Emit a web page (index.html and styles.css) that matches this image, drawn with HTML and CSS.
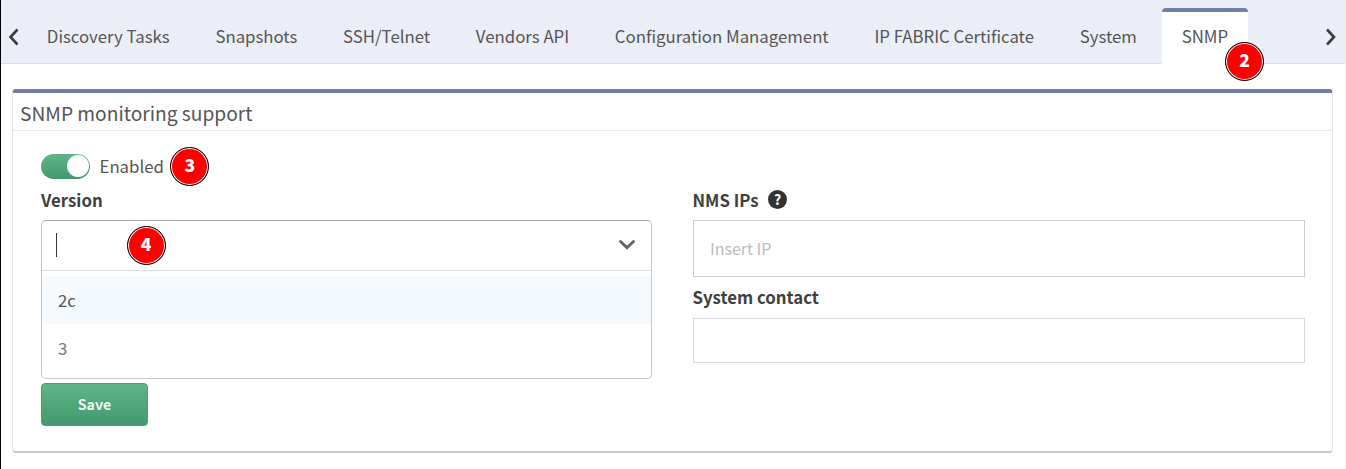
FILE: index.html
```html
<!DOCTYPE html>
<html lang="en">
<head>
<meta charset="utf-8">
<title>SNMP</title>
<link rel="stylesheet" href="styles.css">
</head>
<body>
<div class="page">
  <nav class="tabs">
    <svg class="scroll" width="12" height="18" viewBox="0 0 12 18"><path d="M10.500 1.500 3.500 9l7 7.500"/></svg>
    <div class="tab-list">
      <a class="tab">Discovery Tasks</a>
      <a class="tab">Snapshots</a>
      <a class="tab">SSH/Telnet</a>
      <a class="tab">Vendors API</a>
      <a class="tab">Configuration Management</a>
      <a class="tab">IP FABRIC Certificate</a>
      <a class="tab">System</a>
      <a class="tab active">SNMP<span class="marker marker-tab">2</span></a>
    </div>
    <svg class="scroll" width="12" height="18" viewBox="0 0 12 18"><path d="M2 1.500 9 9l-7 7.500"/></svg>
  </nav>
  <section class="panel">
    <h1 class="panel-title">SNMP monitoring support</h1>
    <div class="columns">
      <div class="column">
        <div class="toggle-row">
          <span class="toggle"><span class="knob"></span></span>
          <span class="toggle-label">Enabled</span>
          <span class="marker">3</span>
        </div>
        <div class="label">Version</div>
        <div class="select">
          <div class="select-head">
            <span class="caret"></span>
            <span class="marker marker-select">4</span>
            <svg class="chevron" width="18" height="12" viewBox="0 0 18 12"><path d="M2.500 2.500 9 8.700l6.500-6.200"/></svg>
          </div>
          <div class="options">
            <div class="option highlighted">2c</div>
            <div class="option">3</div>
          </div>
        </div>
        <button class="save">Save</button>
      </div>
      <div class="column column-right">
        <div class="label">NMS IPs <span class="help">?</span></div>
        <div class="input input-tall">Insert IP</div>
        <div class="label label-contact">System contact</div>
        <div class="input"></div>
      </div>
    </div>
  </section>
</div>
</body>
</html>
```
FILE: styles.css
```css
* { box-sizing: border-box; }
body {
  margin: 0;
  background: #fff;
  color: #555;
  font: 16.8px/24px "Noto Sans CJK SC", "Noto Sans", sans-serif;
}
.page {
  height: 469px;
  border-left: 1px solid #000;
  border-right: 1px solid #ececec;
  overflow: hidden;
}
.tabs {
  display: flex;
  height: 64px;
  padding: 8px 8px 0 6px;
  background: #ebeef6;
  border-bottom: 1px solid #d9dcdf;
}
.scroll {
  flex: none;
  margin-top: 20px;
  fill: none;
  stroke: #3c3c3c;
  stroke-width: 2.6;
}
.tab-list { display: flex; flex: 1; padding-left: 5px; }
.tab {
  position: relative;
  height: 56px;
  padding: 16px 22.85px 0;
  white-space: nowrap;
}
.tab.active {
  margin-left: 2px;
  padding: 12px 20px 0;
  background: #fff;
  border-top: 4px solid #7080a3;
  border-radius: 4px 4px 0 0;
}
.marker {
  display: flex;
  align-items: center;
  justify-content: center;
  width: 39px;
  height: 39px;
  padding-bottom: 2px;
  border: 1px solid #000;
  border-radius: 50%;
  background: #f00;
  box-shadow: inset 0 0 0 1px #fff;
  color: #fff;
  font-size: 17.5px;
  font-weight: 900;
}
.marker-tab { position: absolute; left: 63.500px; top: 29.500px; z-index: 1; }
.marker-select { position: absolute; left: 84.500px; top: 4.500px; }
.panel {
  height: 364px;
  margin: 24.500px 12px 0 11px;
  border: 1px solid #e6e6e6;
  border-top: 4px solid #7080a3;
  border-bottom: 2px solid #cacaca;
  border-radius: 4px;
}
.panel-title {
  height: 38px;
  margin: 0;
  padding: 8px 7px 0;
  border-bottom: 1px solid #e8e8e8;
  font-size: 19.2px;
  font-weight: 400;
}
.columns {
  display: grid;
  grid-template-columns: 611px 612px;
  column-gap: 40.500px;
  padding: 15.500px 0 0 28px;
}
.toggle-row { display: flex; align-items: center; height: 40px; }
.toggle {
  display: flex;
  justify-content: flex-end;
  width: 49px;
  height: 25px;
  padding: 1.500px;
  border-radius: 13px;
  background: linear-gradient(#5eb587, #41996d);
}
.knob { width: 22px; height: 22px; border-radius: 50%; background: #fff; }
.toggle-label { margin: 0 6.500px 0 9.500px; }
.label {
  display: flex;
  align-items: center;
  height: 34px;
  padding-bottom: 7px;
  color: #3f3f3f;
  font-weight: 700;
}
.select {
  height: 159px;
  border: 1px solid #c6c6c6;
  border-top-color: #aaa;
  border-radius: 5px;
}
.select-head {
  position: relative;
  display: flex;
  align-items: center;
  justify-content: space-between;
  height: 49.500px;
  padding: 0 15px 0 14px;
  border-bottom: 1px solid #dedede;
}
.caret { width: 1px; height: 24px; background: #333; }
.chevron { fill: none; stroke: #666; stroke-width: 3; stroke-linecap: round; }
.options { padding-top: 5.500px; }
.option { height: 48px; padding: 12px 16px; color: #777; }
.option.highlighted { background: #f5faff; color: #555; }
.save {
  display: block;
  width: 107px;
  height: 43px;
  margin-top: 4px;
  padding: 0 0 1px;
  border: 1px solid #46a074;
  border-radius: 4px;
  background: linear-gradient(#5eb587, #41996d);
  color: #edf8f2;
  font: 700 14.2px/24px "Noto Sans CJK SC", sans-serif;
}
.column-right { padding-top: 40px; }
.help {
  width: 19px;
  height: 19px;
  margin-left: 9.500px;
  border-radius: 50%;
  background: #333;
  color: #fff;
  font-size: 14px;
  font-weight: 700;
  line-height: 18px;
  text-align: center;
}
.input { height: 45px; border: 1px solid #d5d9e1; }
.input-tall {
  height: 57px;
  padding: 15px 16.500px;
  border-color: #ccc;
  color: #bbb;
  font-size: 16px;
}
.label-contact { height: 41px; padding-bottom: 1px; }
```
